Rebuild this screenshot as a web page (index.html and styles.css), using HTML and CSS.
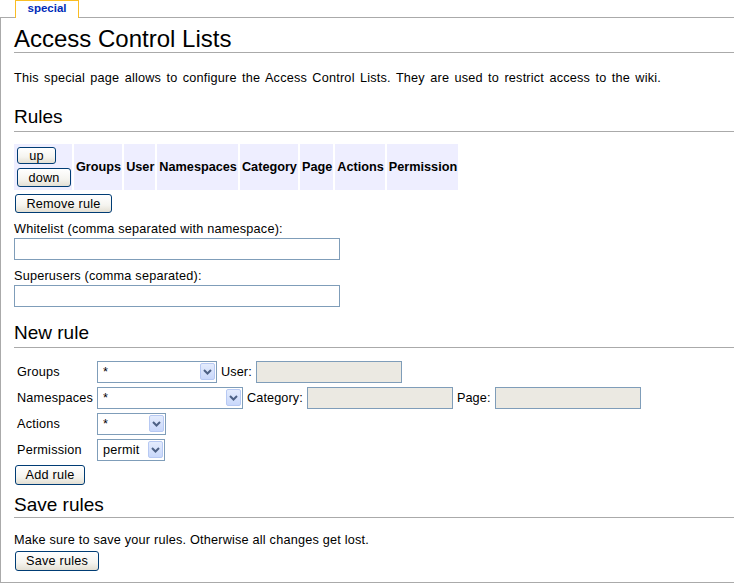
FILE: index.html
```html
<!DOCTYPE html>
<html lang="en">
<head>
<meta charset="utf-8">
<title>Access Control Lists</title>
<link rel="stylesheet" href="styles.css">
</head>
<body>
<div class="tabs"><span class="tab">special</span></div>
<div class="content">
  <h1 class="page-title">Access Control Lists</h1>
  <p class="intro">This special page allows to configure the Access Control Lists. They are used to restrict access to the wiki.</p>

  <h2 class="section section-rules">Rules</h2>
  <table class="rules">
    <tr>
      <td class="updown">
        <button class="btn btn-up" type="button">up</button>
        <button class="btn btn-down" type="button">down</button>
      </td>
      <th>Groups</th>
      <th>User</th>
      <th>Namespaces</th>
      <th>Category</th>
      <th>Page</th>
      <th>Actions</th>
      <th>Permission</th>
    </tr>
  </table>
  <button class="btn btn-remove" type="button">Remove rule</button>
  <label class="field-label">Whitelist (comma separated with namespace):</label>
  <input class="textfield" type="text">
  <label class="field-label">Superusers (comma separated):</label>
  <input class="textfield" type="text">

  <h2 class="section section-new">New rule</h2>
  <div class="ruleform">
    <span class="rf-label">Groups</span>
    <div class="rf-controls">
      <span class="combo combo-groups"><select><option>*</option></select><span class="combo-arrow"><svg viewBox="0 0 15 17" width="15" height="17"><polyline points="4,7 7.5,10.5 11,7" fill="none" stroke="#4d6185" stroke-width="2"/></svg></span></span>
      <span class="inl-label">User:</span>
      <input class="smallfield" type="text" disabled>
    </div>
    <span class="rf-label">Namespaces</span>
    <div class="rf-controls">
      <span class="combo combo-ns"><select><option>*</option></select><span class="combo-arrow"><svg viewBox="0 0 15 17" width="15" height="17"><polyline points="4,7 7.5,10.5 11,7" fill="none" stroke="#4d6185" stroke-width="2"/></svg></span></span>
      <span class="inl-label">Category:</span>
      <input class="smallfield" type="text" disabled>
      <span class="inl-label">Page:</span>
      <input class="smallfield" type="text" disabled>
    </div>
    <span class="rf-label">Actions</span>
    <div class="rf-controls">
      <span class="combo combo-actions"><select><option>*</option></select><span class="combo-arrow"><svg viewBox="0 0 15 17" width="15" height="17"><polyline points="4,7 7.5,10.5 11,7" fill="none" stroke="#4d6185" stroke-width="2"/></svg></span></span>
    </div>
    <span class="rf-label">Permission</span>
    <div class="rf-controls">
      <span class="combo combo-perm"><select><option>permit</option></select><span class="combo-arrow"><svg viewBox="0 0 15 17" width="15" height="17"><polyline points="4,7 7.5,10.5 11,7" fill="none" stroke="#4d6185" stroke-width="2"/></svg></span></span>
    </div>
  </div>
  <button class="btn btn-add" type="button">Add rule</button>

  <h2 class="section section-save">Save rules</h2>
  <p class="save-note">Make sure to save your rules. Otherwise all changes get lost.</p>
  <button class="btn btn-save" type="button">Save rules</button>
</div>
</body>
</html>
```

FILE: styles.css
```css
html, body {
  margin: 0;
  padding: 0;
  background: #ffffff;
}

body {
  font-family: "Liberation Sans", Arial, sans-serif;
  font-size: 12.7px;
  letter-spacing: 0.2px;
  color: #000000;
}

.tabs {
  height: 17px;
  padding-left: 15px;
  position: relative;
  z-index: 1;
}

.tab {
  display: inline-block;
  box-sizing: border-box;
  width: 64px;
  height: 18px;
  border: 1px solid #fabd23;
  border-bottom: none;
  background: #ffffff;
  color: #002bb8;
  font-weight: bold;
  font-size: 11.5px;
  letter-spacing: 0;
  line-height: 15px;
  text-align: center;
}

.content {
  border: 1px solid #aaaaaa;
  border-right: none;
  padding: 0 0 11px 13px;
}

.page-title {
  font-size: 24px;
  font-weight: normal;
  letter-spacing: 0;
  line-height: 27px;
  margin: 7px 0 0;
  border-bottom: 1px solid #aaaaaa;
}

.intro {
  margin: 18px 0 6px;
  line-height: 15px;
  word-spacing: 1.6px;
}

.section {
  font-size: 19px;
  font-weight: normal;
  letter-spacing: 0;
  line-height: 21px;
  margin: 15px 0 0;
  padding-bottom: 4px;
  border-bottom: 1px solid #aaaaaa;
}

.section-rules {
  margin-top: 20px;
}

.rules {
  border-collapse: separate;
  border-spacing: 2px;
  margin: 10px 0 0 -2px;
}

.rules th,
.rules td {
  background: #eeeeff;
  padding: 0 1px 0 2px;
  font-size: 12.7px;
  letter-spacing: 0;
}

.rules th {
  font-weight: bold;
}

.rules .updown {
  padding: 3px 1px 3px 2px;
}

.btn {
  display: block;
  font-family: "Liberation Sans", Arial, sans-serif;
  font-size: 12.7px;
  letter-spacing: 0.2px;
  color: #000000;
  border: 1px solid #003c74;
  border-radius: 3px;
  background: linear-gradient(#ffffff 0%, #f5f4ef 60%, #e3dfd3 100%);
  padding: 0;
  margin: 0 0 0 1px;
  box-sizing: border-box;
  line-height: 14px;
  text-align: center;
}

.btn-up {
  width: 39px;
  height: 17px;
}

.btn-down {
  width: 54px;
  height: 19px;
  margin-top: 4px;
}

.btn-remove {
  height: 19px;
  margin-top: 2px;
  width: 97px;
}

.btn-add {
  height: 20px;
  margin-top: 4px;
  width: 70px;
}

.btn-save {
  height: 20px;
  width: 84px;
}

.field-label {
  display: block;
  line-height: 15px;
  margin-top: 9px;
}

.textfield {
  display: block;
  box-sizing: border-box;
  width: 326px;
  height: 22px;
  margin: 1px 0 0;
  border: 1px solid #7f9db9;
  background: #ffffff;
  padding: 0 3px;
}

.section-new {
  margin-top: 15px;
}

.ruleform {
  display: grid;
  grid-template-columns: 83px auto;
  row-gap: 4px;
  align-items: center;
  margin-top: 13px;
}

.rf-label {
  padding-left: 3px;
  line-height: 22px;
}

.rf-controls {
  display: flex;
  align-items: center;
  gap: 4px;
  height: 22px;
}

.combo {
  position: relative;
  display: inline-block;
  height: 22px;
}

.combo select {
  appearance: none;
  -webkit-appearance: none;
  box-sizing: border-box;
  width: 100%;
  height: 22px;
  border: 1px solid #7f9db9;
  border-radius: 0;
  background: #ffffff;
  font-family: "Liberation Sans", Arial, sans-serif;
  font-size: 12.7px;
  letter-spacing: 0.2px;
  color: #000000;
  padding: 0 0 0 5px;
  margin: 0;
}

.combo-arrow {
  position: absolute;
  top: 2px;
  right: 2px;
  width: 15px;
  height: 17px;
  box-sizing: border-box;
  border: 1px solid #b7c9f3;
  border-radius: 2px;
  background: linear-gradient(#e4ecfd 0%, #c9d8fb 100%);
  pointer-events: none;
}

.combo-arrow svg {
  display: block;
  margin: -1px 0 0 -1px;
}

.combo-groups { width: 120px; }
.combo-ns { width: 146px; }
.combo-actions { width: 69px; }
.combo-perm { width: 68px; }

.inl-label {
  white-space: nowrap;
  letter-spacing: 0.1px;
}

.smallfield {
  box-sizing: border-box;
  width: 146px;
  height: 22px;
  border: 1px solid #7f9db9;
  background: #ebe9e2;
  margin: 0;
  padding: 0;
}

.section-save {
  margin-top: 9px;
  padding-bottom: 2px;
}

.save-note {
  margin: 15px 0 3px;
  line-height: 15px;
}
```
